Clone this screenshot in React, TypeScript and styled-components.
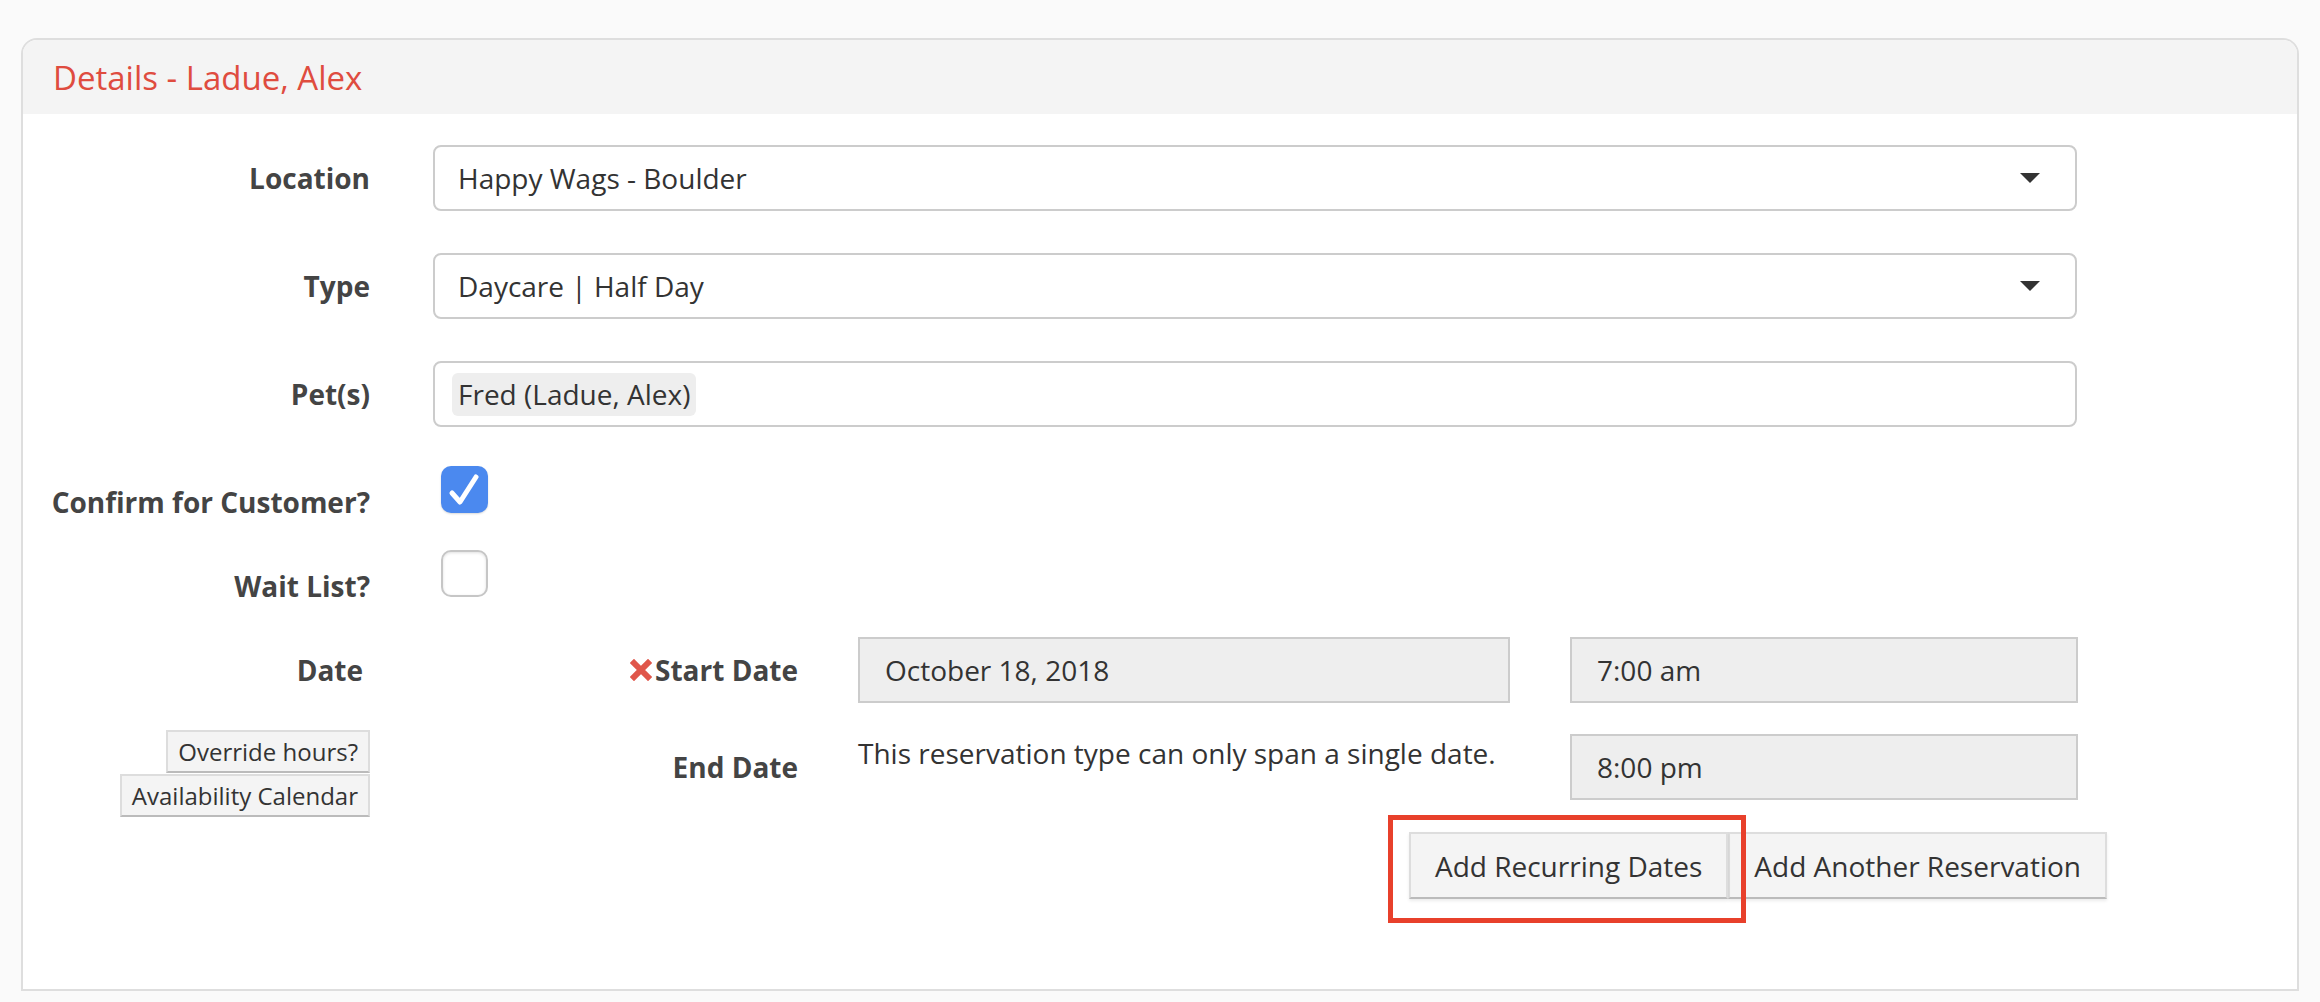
import React from 'react';
import styled, { createGlobalStyle } from 'styled-components';

const GlobalStyle = createGlobalStyle`
  body {
    margin: 0;
    background: #fafafa;
    font-family: "Open Sans", "Liberation Sans", sans-serif;
    color: #333;
  }
`;

const Page = styled.div`
  padding: 38px 21px 0;
  min-height: 100vh;
  box-sizing: border-box;
`;

const Card = styled.section`
  background: #fff;
  border: 2px solid #dedede;
  border-radius: 16px 16px 0 0;
  overflow: hidden;
`;

const Header = styled.header`
  height: 74px;
  display: flex;
  align-items: center;
  padding-left: 30px;
  background: #f4f4f4;
`;

const Title = styled.h2`
  margin: 0;
  font-size: 33px;
  font-weight: 400;
  color: #df4c3f;
`;

const Body = styled.div`
  padding: 31px 0 90px;
`;

const FormRow = styled.div<{ $top?: number; $align?: string }>`
  display: grid;
  grid-template-columns: 347px 1644px;
  column-gap: 63px;
  align-items: ${(p) => p.$align || 'center'};
  margin-top: ${(p) => p.$top ?? 0}px;
`;

const Label = styled.label<{ $tight?: boolean }>`
  text-align: right;
  font-size: 28px;
  font-weight: 700;
  color: #444;
  line-height: ${(p) => (p.$tight ? 1 : 'normal')};
  margin-bottom: ${(p) => (p.$tight ? '-3px' : '0')};
`;

const Field = styled.div<{ $pad?: number }>`
  height: 66px;
  box-sizing: border-box;
  border: 2px solid #ccc;
  border-radius: 8px;
  display: flex;
  align-items: center;
  justify-content: space-between;
  padding: 0 35px 0 ${(p) => p.$pad ?? 23}px;
  font-size: 28px;
  color: #333;
  background: #fff;
`;

const Caret = styled.span`
  width: 0;
  height: 0;
  border-left: 10px solid transparent;
  border-right: 10px solid transparent;
  border-top: 10px solid #333;
`;

const Chip = styled.span`
  height: 43px;
  line-height: 43px;
  padding: 0 6px;
  border-radius: 6px;
  background: #eee;
`;

const Check = styled.span<{ $on?: boolean }>`
  width: 47px;
  height: 47px;
  box-sizing: border-box;
  margin-left: 8px;
  border-radius: 10px;
  display: flex;
  align-items: center;
  justify-content: center;
  background: ${(p) => (p.$on ? '#4b89ef' : '#fff')};
  border: ${(p) => (p.$on ? 'none' : '2px solid #c6c6c6')};
  box-shadow: ${(p) =>
    p.$on ? '0 1px 2px rgba(0,0,0,0.15)' : 'inset 0 1px 3px rgba(0,0,0,0.12)'};
`;

const DateSide = styled.div`
  display: flex;
  flex-direction: column;
  align-items: flex-end;
`;

const DateLabel = styled(Label)`
  height: 66px;
  line-height: 66px;
  padding-right: 7px;
`;

const SmallStack = styled.div`
  margin-top: 27px;
  display: flex;
  flex-direction: column;
  align-items: flex-end;
  gap: 1px;
`;

const SmallButton = styled.button`
  height: 43px;
  box-sizing: border-box;
  padding: 0 10px;
  font-family: inherit;
  font-size: 24px;
  color: #333;
  background: #f4f4f4;
  border: 2px solid #ddd;
  border-bottom-color: #bbb;
  border-radius: 0;
`;

const DateGrid = styled.div`
  display: grid;
  grid-template-columns: 365px 652px 508px;
  column-gap: 60px;
  row-gap: 31px;
  align-items: center;
`;

const SubLabel = styled(Label)`
  height: 66px;
  display: flex;
  align-items: center;
  justify-content: flex-end;
`;

const DateBox = styled.div`
  height: 66px;
  box-sizing: border-box;
  border: 2px solid #ccc;
  background: #eee;
  padding-left: 25px;
  display: flex;
  align-items: center;
  font-size: 28px;
  color: #333;
`;

const Note = styled.p`
  margin: 0;
  align-self: start;
  font-size: 28px;
  line-height: 38px;
  color: #333;
`;

const ButtonRow = styled.div`
  grid-column: 1 / -1;
  display: flex;
  justify-content: flex-end;
  margin-right: -29px;
  margin-top: 1px;
`;

const BigButton = styled.button`
  height: 67px;
  box-sizing: border-box;
  padding: 0 24px;
  font-family: inherit;
  font-size: 28px;
  color: #333;
  background: #f4f4f4;
  border: 2px solid #ddd;
  border-bottom-color: #bbb;
  border-radius: 0;
  box-shadow: 0 2px 3px rgba(0, 0, 0, 0.08);
`;

const Highlight = styled.span`
  position: relative;
  display: inline-flex;

  &::after {
    content: '';
    position: absolute;
    top: -17px;
    right: -18px;
    bottom: -24px;
    left: -21px;
    border: 5px solid #e8402b;
    pointer-events: none;
  }
`;

const Required = () => (
  <svg width="22" height="22" viewBox="0 0 22 22" style={{ marginRight: 3 }}>
    <path d="M4 4L18 18M18 4L4 18" stroke="#e0564a" strokeWidth="6" strokeLinecap="square" />
  </svg>
);

const Tick = () => (
  <svg width="47" height="47" viewBox="0 0 47 47">
    <path
      d="M11 27L19 36L35 11"
      fill="none"
      stroke="#fff"
      strokeWidth="5"
      strokeLinecap="round"
      strokeLinejoin="round"
    />
  </svg>
);

export default function App() {
  return (
    <Page>
      <GlobalStyle />
      <Card>
        <Header>
          <Title>Details - Ladue, Alex</Title>
        </Header>
        <Body>
          <FormRow>
            <Label>Location</Label>
            <Field>
              Happy Wags - Boulder
              <Caret />
            </Field>
          </FormRow>
          <FormRow $top={42}>
            <Label>Type</Label>
            <Field>
              Daycare | Half Day
              <Caret />
            </Field>
          </FormRow>
          <FormRow $top={42}>
            <Label>Pet(s)</Label>
            <Field $pad={17}>
              <Chip>Fred (Ladue, Alex)</Chip>
            </Field>
          </FormRow>
          <FormRow $top={39} $align="end">
            <Label $tight>Confirm for Customer?</Label>
            <Check $on>
              <Tick />
            </Check>
          </FormRow>
          <FormRow $top={37} $align="end">
            <Label $tight>Wait List?</Label>
            <Check />
          </FormRow>
          <FormRow $top={40} $align="start">
            <DateSide>
              <DateLabel>Date</DateLabel>
              <SmallStack>
                <SmallButton>Override hours?</SmallButton>
                <SmallButton>Availability Calendar</SmallButton>
              </SmallStack>
            </DateSide>
            <DateGrid>
              <SubLabel>
                <Required />
                Start Date
              </SubLabel>
              <DateBox>October 18, 2018</DateBox>
              <DateBox>7:00 am</DateBox>
              <SubLabel>End Date</SubLabel>
              <Note>This reservation type can only span a single date.</Note>
              <DateBox>8:00 pm</DateBox>
              <ButtonRow>
                <Highlight>
                  <BigButton>Add Recurring Dates</BigButton>
                </Highlight>
                <BigButton>Add Another Reservation</BigButton>
              </ButtonRow>
            </DateGrid>
          </FormRow>
        </Body>
      </Card>
    </Page>
  );
}
